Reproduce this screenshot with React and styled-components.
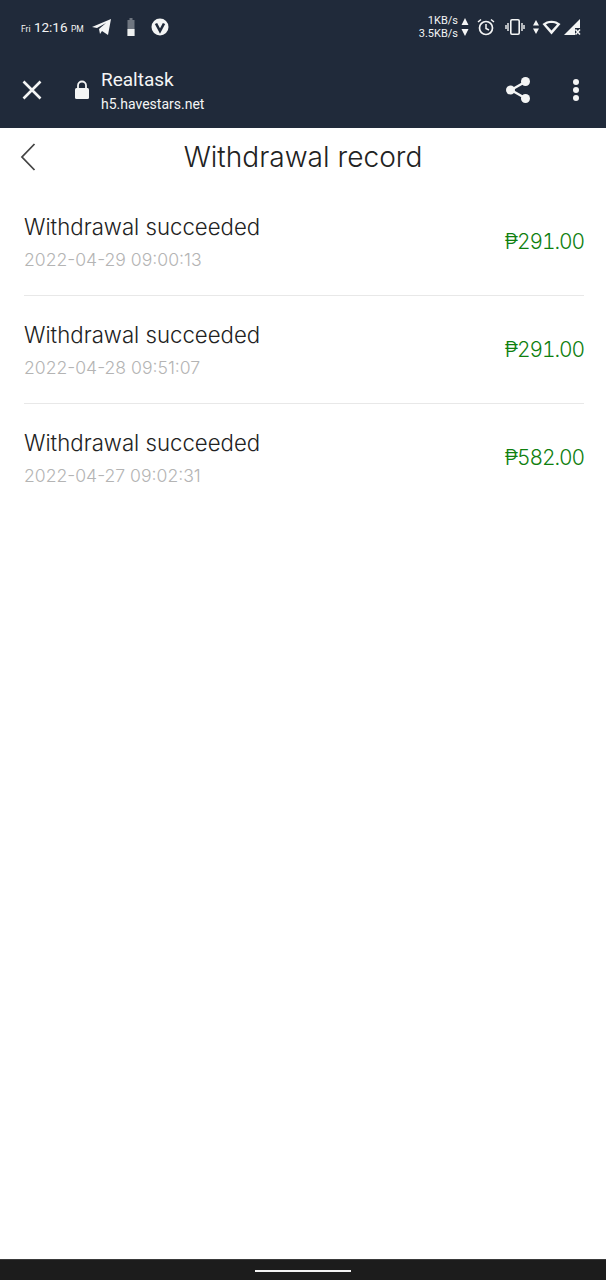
import styled, { createGlobalStyle } from "styled-components";

const Global = createGlobalStyle`
  html, body { margin: 0; padding: 0; background: #fff; }
  * { box-sizing: border-box; }
`;

const Page = styled.div`
  width: 606px;
  height: 1280px;
  display: flex;
  flex-direction: column;
  background: #fff;
  font-family: "Inter", "Liberation Sans", sans-serif;
  overflow: hidden;
`;

const Header = styled.header`
  height: 128px;
  background: #202a3a;
  color: #f4f5f5;
  font-family: "Roboto", "Liberation Sans", sans-serif;
`;

const StatusBar = styled.div`
  height: 54px;
  padding: 0 25px 0 21px;
  display: flex;
  align-items: center;
  justify-content: space-between;
`;

const StatusGroup = styled.div`
  display: flex;
  align-items: center;
`;

const Clock = styled.span`
  font-size: 13.5px;
  width: 71px;
  white-space: nowrap;
  span { font-size: 8.5px; }
`;

const Speed = styled.div`
  font-size: 11px;
  line-height: 13px;
  text-align: right;
`;

const Toolbar = styled.div`
  height: 74px;
  padding: 0 26px 2px 21px;
  display: flex;
  align-items: center;
`;

const SiteInfo = styled.div`
  flex: 1;
  margin-left: 11px;
`;

const SiteName = styled.div`
  font-size: 19px;
  line-height: 24px;
  margin: 1px 0 2px;
`;

const SiteUrl = styled.div`
  font-size: 14px;
  line-height: 20px;
`;

const TitleBar = styled.div`
  height: 60px;
  padding-bottom: 3px;
  display: flex;
  align-items: center;
  justify-content: center;
  position: relative;
`;

const BackIcon = styled.svg`
  position: absolute;
  left: 20px;
  top: 15px;
`;

const Title = styled.h1`
  margin: 0;
  font-size: 28.1px;
  font-weight: 300;
  color: #222;
`;

const List = styled.div`
  flex: 1;
  padding: 0 22px 0 24px;
`;

const Row = styled.div`
  height: 108px;
  padding-bottom: 2px;
  display: flex;
  align-items: center;
  justify-content: space-between;
  border-bottom: ${(p) => (p.$last ? "none" : "1px solid #e8e8e8")};
`;

const RowName = styled.div`
  font-size: 22.2px;
  font-weight: 300;
  line-height: 30px;
  margin-top: 2px;
  color: #222;
`;

const RowDate = styled.div`
  font-size: 17.6px;
  font-weight: 300;
  line-height: 24px;
  margin-top: 6px;
  color: #b4b4b4;
`;

const Amount = styled.div`
  font-size: 21px;
  font-weight: 300;
  font-variant-numeric: tabular-nums;
  letter-spacing: -1.1px;
  margin-top: 1px;
  color: #0f800f;
`;

const NavBar = styled.div`
  height: 21px;
  background: #1c1c1c;
  border-top: 1px solid #3a3a3a;
  display: flex;
  justify-content: center;
  padding-top: 10px;
`;

const HomeLine = styled.div`
  width: 96px;
  height: 2px;
  background: #f2f2f2;
`;

const Icon = styled.svg`
  display: block;
  flex: none;
  margin-left: ${(p) => p.$ml || 0}px;
`;

const records = [
  { date: "2022-04-29 09:00:13", amount: "₱291.00" },
  { date: "2022-04-28 09:51:07", amount: "₱291.00" },
  { date: "2022-04-27 09:02:31", amount: "₱582.00" },
];

const App = () => (
  <Page>
    <Global />
    <Header>
      <StatusBar>
        <StatusGroup>
          <Clock>
            <span>Fri</span> 12:16 <span>PM</span>
          </Clock>
          <Icon width="20" height="18" viewBox="0 0 20 18">
            <path d="M0 9 19 1 16 17 10 13 8 16 7 11 14 5 5 10z" fill="#f4f5f5" />
          </Icon>
          <Icon width="10" height="18" viewBox="0 0 10 18" $ml={14}>
            <path d="M3.500 0h3v2h2v16h-7V2h2z" fill="#6f7680" />
            <rect x="1.500" y="11" width="7" height="7" fill="#eef0f0" />
          </Icon>
          <Icon width="18" height="18" viewBox="0 0 18 18" $ml={15}>
            <circle cx="9" cy="9" r="8.500" fill="#f4f5f5" />
            <path d="M5 5.500 9 13l4-7.500" fill="none" stroke="#202a3a" strokeWidth="2.600" />
          </Icon>
        </StatusGroup>
        <StatusGroup>
          <Speed>
            1KB/s
            <br />
            3.5KB/s
          </Speed>
          <Icon width="8" height="22" viewBox="0 0 8 22" $ml={3}>
            <path d="M4 2 7.500 9H.5zM.5 13h7L4 20z" fill="#f4f5f5" />
          </Icon>
          <Icon width="18" height="18" viewBox="0 0 18 18" $ml={8}>
            <circle cx="9" cy="10" r="6.500" fill="none" stroke="#f4f5f5" strokeWidth="1.700" />
            <path d="M9 6v4.500l3 1.500M1 4l3-2.500M17 4l-3-2.500" fill="none" stroke="#f4f5f5" strokeWidth="1.500" />
          </Icon>
          <Icon width="20" height="18" viewBox="0 0 20 18" $ml={10}>
            <rect x="5.800" y="1.800" width="8.400" height="14.400" rx="1.200" fill="none" stroke="#f4f5f5" strokeWidth="1.600" />
            <path d="M3 5v8M1 7v4M17 5v8M19 7v4" stroke="#f4f5f5" strokeWidth="1.400" />
          </Icon>
          <Icon width="8" height="16" viewBox="0 0 8 16" $ml={7}>
            <path d="M4 1 7 6.500H1zM1 9.500h6L4 15z" fill="#f4f5f5" />
          </Icon>
          <Icon width="19" height="16" viewBox="0 0 19 16" $ml={2}>
            <path d="M.5 5C5.500.5 13.500.5 18.500 5L9.500 15.500zM4 5.500C7 3.600 12 3.600 15 5.500L9.500 11.500z" fill="#f4f5f5" fillRule="evenodd" />
          </Icon>
          <Icon width="18" height="18" viewBox="0 0 18 18" $ml={2}>
            <path d="M17 1v9h-5v7H1z" fill="#f4f5f5" />
            <path d="M12.500 11.500 17 16.500M17 11.500 12.500 16.500" stroke="#f4f5f5" strokeWidth="1.500" />
          </Icon>
        </StatusGroup>
      </StatusBar>
      <Toolbar>
        <Icon width="22" height="22" viewBox="0 0 22 22">
          <path d="M2.500 2.500 19.500 19.500M19.500 2.500 2.500 19.500" stroke="#f4f5f5" strokeWidth="2.600" />
        </Icon>
        <Icon width="16" height="20" viewBox="0 0 16 20" $ml={31}>
          <path d="M4 9V5.500a4 4 0 0 1 8 0V9" fill="none" stroke="#f4f5f5" strokeWidth="1.800" />
          <rect x="1" y="8" width="14" height="11" rx="1.500" fill="#f4f5f5" />
        </Icon>
        <SiteInfo>
          <SiteName>Realtask</SiteName>
          <SiteUrl>h5.havestars.net</SiteUrl>
        </SiteInfo>
        <Icon width="26" height="28" viewBox="0 0 26 28">
          <path d="M6 14 20 6M6 14l14 8" stroke="#f4f5f5" strokeWidth="2.400" />
          <circle cx="5.500" cy="14" r="4.500" fill="#f4f5f5" />
          <circle cx="20.500" cy="5.500" r="4.500" fill="#f4f5f5" />
          <circle cx="20.500" cy="22.500" r="4.500" fill="#f4f5f5" />
        </Icon>
        <Icon width="8" height="24" viewBox="0 0 8 24" $ml={41}>
          <circle cx="4" cy="4" r="3" fill="#f4f5f5" />
          <circle cx="4" cy="12" r="3" fill="#f4f5f5" />
          <circle cx="4" cy="20" r="3" fill="#f4f5f5" />
        </Icon>
      </Toolbar>
    </Header>
    <TitleBar>
      <BackIcon width="16" height="28" viewBox="0 0 16 28">
        <path d="M14.500 1 2 14l12.500 13" fill="none" stroke="#444" strokeWidth="1.800" />
      </BackIcon>
      <Title>Withdrawal record</Title>
    </TitleBar>
    <List>
      {records.map((r, i) => (
        <Row key={r.date} $last={i === records.length - 1}>
          <div>
            <RowName>Withdrawal succeeded</RowName>
            <RowDate>{r.date}</RowDate>
          </div>
          <Amount>{r.amount}</Amount>
        </Row>
      ))}
    </List>
    <NavBar>
      <HomeLine />
    </NavBar>
  </Page>
);

export default App;
